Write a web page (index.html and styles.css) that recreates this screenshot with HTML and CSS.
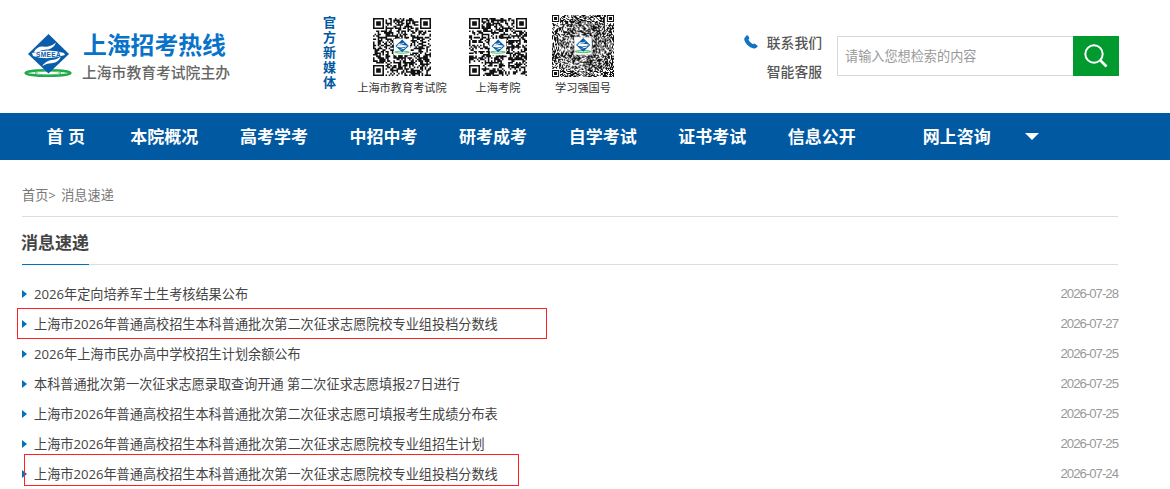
FILE: index.html
```
<!DOCTYPE html>
<html lang="zh-CN">

<head>
    <meta charset="UTF-8">
    <meta name="viewport" content="width=device-width, initial-scale=1.0">
    <title>消息速递 - 上海招考热线</title>
    <link rel="stylesheet" href="styles.css">
</head>

<body>
    <svg width="0" height="0" class="defs">
        <symbol id="emblem" viewBox="0 0 50 46">
            <ellipse cx="25" cy="39" rx="22.5" ry="2.9" fill="#e4f6e4" stroke="#1fa94c" stroke-width="2.4" />
            <ellipse cx="25" cy="39" rx="13" ry="1.8" fill="#fff" stroke="#58c473" stroke-width="1" />
            <path d="M25.5 0 L46 20 L25.5 39.5 L5 20 Z" fill="#0a5dab" />
            <path d="M11 18 Q14 12 20 12.5 Q26 14 33 8.5 Q31 14 25 15.5 Q19 15 15 18 Z" fill="#fff" />
            <path d="M19 32 Q23 27 28 26 Q34 26 38 22 Q36 28 30 29 Q24 29 19 32 Z" fill="#fff" />
            <path d="M9 19 Q25 14 41 19 L42 21 Q25 27 10 22 Z" fill="#fff" />
        </symbol>
    </svg>

    <div class="header">
        <a class="logo" href="#">
            <span class="emblem">
                <svg width="50" height="46"><use href="#emblem" /></svg>
                <b>SMEEA</b>
            </span>
            <span class="names">
                <strong>上海招考热线</strong>
                <em>上海市教育考试院主办</em>
            </span>
        </a>

        <div class="media">官方新媒体</div>

        <div class="codes">
            <div class="code">
                <svg class="qr" data-size="37" data-seed="11" viewBox="0 0 37 37"></svg>
                <p>上海市教育考试院</p>
            </div>
            <div class="code">
                <svg class="qr" data-size="37" data-seed="29" viewBox="0 0 37 37"></svg>
                <p>上海考院</p>
            </div>
            <div class="code">
                <svg class="qr big" data-size="61" data-seed="47" viewBox="0 0 61 61"></svg>
                <p>学习强国号</p>
            </div>
        </div>

        <div class="contact">
            <a href="#">
                <svg width="14" height="14" viewBox="0 0 14 14">
                    <path d="M1 2.2 L2.8 .3 Q3.6 0 4.2 .7 L5.3 3 Q5.4 3.8 4.4 4.5 Q5.7 7.8 9 9.3 Q10 8.3 10.8 8.7 L13.4 10.4 Q14 11.1 13.4 11.8 Q12 13.8 9.6 13.4 Q2.3 11.5 .3 5 Q0 3.4 1 2.2 Z" fill="#0f74c4" />
                </svg>联系我们</a>
            <a href="#">智能客服</a>
        </div>

        <form class="search">
            <input type="text" placeholder="请输入您想检索的内容">
            <button type="button">
                <svg width="24" height="24" viewBox="0 0 24 24" fill="none" stroke="#fff">
                    <circle cx="10" cy="10" r="8.7" stroke-width="2" />
                    <path d="M16 16 L22.5 22.5" stroke-width="2.6" />
                </svg>
            </button>
        </form>
    </div>

    <div class="nav">
        <a class="home" href="#">首 页</a>
        <a href="#">本院概况</a>
        <a href="#">高考学考</a>
        <a href="#">中招中考</a>
        <a href="#">研考成考</a>
        <a href="#">自学考试</a>
        <a href="#">证书考试</a>
        <a href="#">信息公开</a>
        <a class="ask" href="#">网上咨询</a>
        <i></i>
    </div>

    <div class="main">
        <div class="crumb"><a href="#">首页</a>&gt; 消息速递</div>
        <div class="title"><h2>消息速递</h2></div>

        <ul class="list">
            <li><a href="#">2026年定向培养军士生考核结果公布</a><span>2026-07-28</span></li>
            <li class="mark"><a href="#">上海市2026年普通高校招生本科普通批次第二次征求志愿院校专业组投档分数线</a><span>2026-07-27</span></li>
            <li><a href="#">2026年上海市民办高中学校招生计划余额公布</a><span>2026-07-25</span></li>
            <li><a href="#">本科普通批次第一次征求志愿录取查询开通 第二次征求志愿填报27日进行</a><span>2026-07-25</span></li>
            <li><a href="#">上海市2026年普通高校招生本科普通批次第二次征求志愿可填报考生成绩分布表</a><span>2026-07-25</span></li>
            <li><a href="#">上海市2026年普通高校招生本科普通批次第二次征求志愿院校专业组招生计划</a><span>2026-07-25</span></li>
            <li class="mark last"><a href="#">上海市2026年普通高校招生本科普通批次第一次征求志愿院校专业组投档分数线</a><span>2026-07-24</span></li>
        </ul>
    </div>

    <script src="qr.js"></script>
</body>

</html>
```
FILE: qr.js
```
function drawCode(svg) {
    const n = Number(svg.dataset.size);
    let seed = Number(svg.dataset.seed);
    let d = '';

    function random() {
        seed = (seed * 16807) % 2147483647;
        return seed / 2147483647;
    }

    for (let i = 0; i < 20; i++) random();

    for (let y = 0; y < n; y++) {
        for (let x = 0; x < n; x++) {
            const on = random() < 0.52;
            const corner = (x < 8 && y < 8) || (x >= n - 8 && y < 8) || (x < 8 && y >= n - 8);
            if (on && !corner) d += 'M' + x + ' ' + y + 'h1v1h-1z';
        }
    }

    // three finder squares
    [[0, 0], [n - 7, 0], [0, n - 7]].forEach(function (p) {
        d += 'M' + p[0] + ' ' + p[1] + 'h7v7h-7z m1 1v5h5v-5z m1 1h3v3h-3z';
    });

    const s = n * 0.28;
    const o = (n - s) / 2;
    svg.innerHTML = '<path d="' + d + '"/>' +
        '<rect x="' + o + '" y="' + o + '" width="' + s + '" height="' + s + '" fill="#fff"/>' +
        '<use href="#emblem" x="' + o + '" y="' + o + '" width="' + s + '" height="' + s + '"/>';
}

document.querySelectorAll('.qr').forEach(drawCode);
```
FILE: styles.css
```
* {
    box-sizing: border-box;
    margin: 0;
    padding: 0;
}

body {
    font-family: "Open Sans", "Noto Sans CJK SC", sans-serif;
    font-size: 13.15px;
    color: #444;
    background: #fff;
    height: 489px;
    overflow: hidden;
}

a {
    color: inherit;
    text-decoration: none;
}

.defs {
    position: absolute;
}

.header {
    display: flex;
    align-items: flex-start;
    height: 113px;
    padding-left: 23px;
}

.logo {
    display: flex;
    width: 300px;
    padding-top: 30px;
}

.emblem {
    position: relative;
    width: 50px;
    padding-top: 4px;
}

.emblem b {
    position: absolute;
    left: 13px;
    top: 20px;
    font: bold 6.5px/9px "Liberation Sans", sans-serif;
    letter-spacing: .4px;
    color: #0a5dab;
}

.names {
    display: block;
    margin-left: 9px;
    white-space: nowrap;
}

.names strong {
    display: block;
    margin-left: 1px;
    font-size: 23.8px;
    line-height: 30px;
    color: #0873c8;
}

.names em {
    display: block;
    font-size: 14.8px;
    font-style: normal;
    font-weight: 500;
    line-height: 25px;
    color: #666;
}

.media {
    width: 14px;
    margin-top: 15px;
    font-size: 13px;
    font-weight: bold;
    line-height: 15px;
    color: #0059a1;
}

.codes {
    display: flex;
    width: 393px;
    padding: 15px 0 0 20px;
}

.code {
    display: flex;
    flex-direction: column;
    align-items: center;
    width: 90px;
    margin-right: 6px;
}

.code:nth-child(2) {
    margin-right: -5px;
}

.code p {
    font-size: 11.2px;
    line-height: 20px;
    color: #333;
    white-space: nowrap;
}

.qr {
    width: 58px;
    height: 58px;
    margin: 3px 0 2px;
    fill: #111;
}

.qr.big {
    width: 62px;
    height: 62px;
    margin: 0 0 1px;
}

.contact {
    display: flex;
    flex-direction: column;
    align-items: flex-end;
    width: 92px;
    padding-top: 28px;
    font-size: 13.8px;
    font-weight: 500;
    line-height: 29px;
    color: #555;
}

.contact a {
    display: flex;
}

.contact svg {
    margin: 7px 9px 0 0;
}

.search {
    display: flex;
    width: 282px;
    height: 40px;
    margin: 36px 0 0 15px;
}

.search input {
    width: 236px;
    border: 1px solid #d8d8d8;
    border-right: 0;
    padding: 0 7px;
    font: inherit;
}

.search input::placeholder {
    color: #999;
}

.search button {
    width: 46px;
    border: 0;
    padding-top: 2px;
    background: #009a2e;
}

.nav {
    display: flex;
    align-items: center;
    height: 47px;
    padding-left: 22px;
    background: #0059a1;
    color: #fff;
    font-size: 17px;
    font-weight: bold;
    line-height: 47px;
}

.nav a {
    width: 109.6px;
    text-align: center;
}

.nav a.home {
    width: 87.5px;
}

.nav a.ask {
    width: 160px;
}

.nav i {
    margin-left: -12px;
    border: 7px solid transparent;
    border-top-color: #fff;
    border-bottom: 0;
}

.main {
    width: 1096px;
    margin-left: 22px;
}

.crumb {
    height: 57px;
    padding-top: 14px;
    border-bottom: 1px solid #ddd;
    line-height: 42px;
    color: #777;
    word-spacing: 2px;
}

.title {
    height: 48px;
    border-bottom: 1px solid #ddd;
}

.title h2 {
    width: 67px;
    height: 48px;
    border-bottom: 1px solid #0070c0;
    font-size: 17px;
    line-height: 52px;
    white-space: nowrap;
    text-indent: -1px;
}

.list {
    padding-top: 14px;
    list-style: none;
}

.list li {
    position: relative;
    display: flex;
    align-items: center;
    height: 30px;
}

.list li::before {
    content: "";
    margin-right: 7px;
    border: 4px solid transparent;
    border-left: 5px solid #0070c0;
    border-right: 0;
}

.list a {
    padding-bottom: 2px;
}

.list span {
    margin-left: auto;
    padding-bottom: 2px;
    font-family: "Liberation Sans", Arial, sans-serif;
    font-size: 13.2px;
    letter-spacing: -1px;
    color: #999;
}

/* red frame round a highlighted row */
.mark::after {
    content: "";
    position: absolute;
    left: -5px;
    top: -1px;
    width: 528px;
    height: 29px;
    border: 1px solid #f22;
}

.mark.last::after {
    left: 2px;
    top: -5px;
    width: 493px;
    height: 30px;
}
```
